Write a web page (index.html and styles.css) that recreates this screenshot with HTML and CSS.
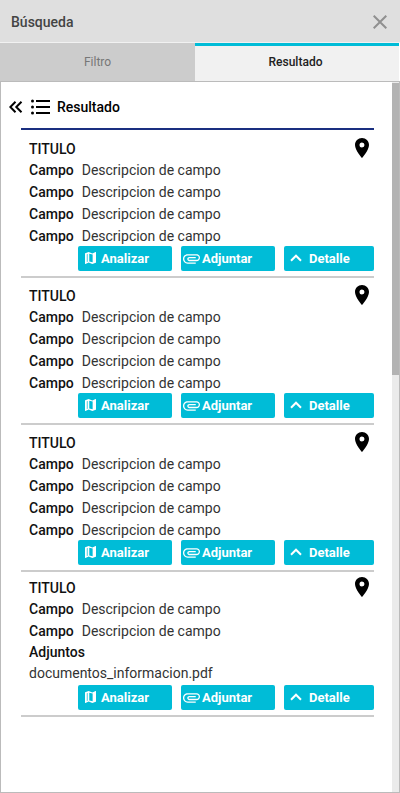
FILE: index.html
```
<!DOCTYPE html>
<html lang="es">
<head>
<meta charset="utf-8">
<meta name="viewport" content="width=device-width, initial-scale=1">
<title>Búsqueda</title>
<link rel="stylesheet" href="styles.css">
</head>
<body>
<svg class="sprite" aria-hidden="true">
  <symbol id="pin" viewBox="0 0 14 20"><path d="M7 0C3.1 0 0 3.1 0 7c0 5.200 7 13 7 13s7-7.800 7-13c0-3.900-3.100-7-7-7zm0 9.500a2.500 2.500 0 1 1 0-5 2.500 2.500 0 0 1 0 5z"/></symbol>
  <symbol id="map" viewBox="3 3 18 18" preserveAspectRatio="none"><path fill-rule="evenodd" d="M20.500 3l-.16.030L15 5.100 9 3 3.360 4.900c-.21.070-.36.250-.36.480V20.500c0 .28.220.5.500.5l.16-.030L9 18.900l6 2.100 5.640-1.900c.21-.070.36-.25.36-.48V3.500c0-.28-.22-.5-.5-.5zM10 5.470l5.500 1.400v11.660l-5.500-1.400V5.470zM6 6.460l1.200-.4v11.400l-1.200.4V6.460z"/></symbol>
  <symbol id="clip" viewBox="2 7 20 11"><path d="M2 12.500C2 9.460 4.460 7 7.500 7H18c2.210 0 4 1.790 4 4s-1.790 4-4 4H9.500C8.120 15 7 13.880 7 12.500S8.120 10 9.500 10H17v1.500H9.410c-1.100 0-1.100 2 0 2H18c1.380 0 2.500-1.120 2.500-2.500S19.380 8.500 18 8.500H7.500c-2.210 0-4 1.790-4 4s1.790 4 4 4H17V18H7.500C4.460 18 2 15.540 2 12.500z"/></symbol>
  <symbol id="up" viewBox="0 0 12 8"><path d="M1 6.700l5-5 5 5" fill="none" stroke="currentColor" stroke-width="2"/></symbol>
</svg>
<main class="panel">
  <header class="panel-header">
    <h1 class="panel-title">Búsqueda</h1>
    <button class="icon-button" type="button" aria-label="Cerrar">
      <svg class="close-icon" viewBox="0 0 14 14"><path d="M.7.7l12.600 12.600M13.300.7L.7 13.300" fill="none" stroke="currentColor" stroke-width="2"/></svg>
    </button>
  </header>
  <nav class="tabs" role="tablist">
    <button class="tab" type="button" role="tab" aria-selected="false">Filtro</button>
    <button class="tab tab-active" type="button" role="tab" aria-selected="true">Resultado</button>
  </nav>
  <div class="panel-body">
    <section class="content">
      <div class="results-heading">
        <button class="icon-button" type="button" aria-label="Volver">
          <svg class="back-icon" viewBox="0 0 14 12"><path d="M6.500.8L1.300 6l5.200 5.200M12.500.8L7.300 6l5.200 5.200" fill="none" stroke="currentColor" stroke-width="2"/></svg>
        </button>
        <svg class="list-icon" viewBox="0 0 19 16" aria-hidden="true"><path d="M5 1h14v2H5zM5 7h14v2H5zM5 13h14v2H5z"/><circle cx="1.500" cy="2" r="1.500"/><circle cx="1.500" cy="8" r="1.500"/><circle cx="1.500" cy="14" r="1.500"/></svg>
        <h2 class="results-title">Resultado</h2>
      </div>
      <div class="results">
        <article class="result">
          <div class="result-head"><h3 class="result-title">TITULO</h3><svg class="pin-icon" aria-hidden="true"><use href="#pin"/></svg></div>
          <dl class="fields">
            <div class="field"><dt>Campo</dt><dd>Descripcion de campo</dd></div>
            <div class="field"><dt>Campo</dt><dd>Descripcion de campo</dd></div>
            <div class="field"><dt>Campo</dt><dd>Descripcion de campo</dd></div>
            <div class="field"><dt>Campo</dt><dd>Descripcion de campo</dd></div>
          </dl>
          <div class="actions">
            <button class="action" type="button"><svg class="map-icon"><use href="#map"/></svg>Analizar</button>
            <button class="action action-attach" type="button"><svg class="clip-icon"><use href="#clip"/></svg>Adjuntar</button>
            <button class="action action-detail" type="button"><svg class="up-icon"><use href="#up"/></svg>Detalle</button>
          </div>
        </article>
        <article class="result">
          <div class="result-head"><h3 class="result-title">TITULO</h3><svg class="pin-icon" aria-hidden="true"><use href="#pin"/></svg></div>
          <dl class="fields">
            <div class="field"><dt>Campo</dt><dd>Descripcion de campo</dd></div>
            <div class="field"><dt>Campo</dt><dd>Descripcion de campo</dd></div>
            <div class="field"><dt>Campo</dt><dd>Descripcion de campo</dd></div>
            <div class="field"><dt>Campo</dt><dd>Descripcion de campo</dd></div>
          </dl>
          <div class="actions">
            <button class="action" type="button"><svg class="map-icon"><use href="#map"/></svg>Analizar</button>
            <button class="action action-attach" type="button"><svg class="clip-icon"><use href="#clip"/></svg>Adjuntar</button>
            <button class="action action-detail" type="button"><svg class="up-icon"><use href="#up"/></svg>Detalle</button>
          </div>
        </article>
        <article class="result">
          <div class="result-head"><h3 class="result-title">TITULO</h3><svg class="pin-icon" aria-hidden="true"><use href="#pin"/></svg></div>
          <dl class="fields">
            <div class="field"><dt>Campo</dt><dd>Descripcion de campo</dd></div>
            <div class="field"><dt>Campo</dt><dd>Descripcion de campo</dd></div>
            <div class="field"><dt>Campo</dt><dd>Descripcion de campo</dd></div>
            <div class="field"><dt>Campo</dt><dd>Descripcion de campo</dd></div>
          </dl>
          <div class="actions">
            <button class="action" type="button"><svg class="map-icon"><use href="#map"/></svg>Analizar</button>
            <button class="action action-attach" type="button"><svg class="clip-icon"><use href="#clip"/></svg>Adjuntar</button>
            <button class="action action-detail" type="button"><svg class="up-icon"><use href="#up"/></svg>Detalle</button>
          </div>
        </article>
        <article class="result result-compact">
          <div class="result-head"><h3 class="result-title">TITULO</h3><svg class="pin-icon" aria-hidden="true"><use href="#pin"/></svg></div>
          <dl class="fields">
            <div class="field"><dt>Campo</dt><dd>Descripcion de campo</dd></div>
            <div class="field"><dt>Campo</dt><dd>Descripcion de campo</dd></div>
            <div class="attachments"><dt>Adjuntos</dt><dd>documentos_informacion.pdf</dd></div>
          </dl>
          <div class="actions">
            <button class="action" type="button"><svg class="map-icon"><use href="#map"/></svg>Analizar</button>
            <button class="action action-attach" type="button"><svg class="clip-icon"><use href="#clip"/></svg>Adjuntar</button>
            <button class="action action-detail" type="button"><svg class="up-icon"><use href="#up"/></svg>Detalle</button>
          </div>
        </article>
      </div>
    </section>
    <div class="scroll-track" aria-hidden="true"><div class="scroll-thumb"></div></div>
  </div>
</main>
</body>
</html>
```
FILE: styles.css
```
* { box-sizing: border-box; }

body {
  margin: 0;
  font-family: Roboto, "Liberation Sans", sans-serif;
  font-size: 14px;
  color: #333;
  background: #fff;
}

h1, h2, h3, dl, dd { margin: 0; }

button {
  font-family: inherit;
  border: 0;
  cursor: pointer;
}

svg { flex: none; fill: currentColor; }

.sprite { display: none; }

.panel {
  display: flex;
  flex-direction: column;
  min-height: 100vh;
}

.panel-header {
  display: flex;
  align-items: center;
  justify-content: space-between;
  height: 43px;
  padding: 2px 13px 0 11px;
  background: #dfdfdf;
  border-bottom: 1px solid #f1f1f1;
}

.panel-title {
  font-size: 14px;
  font-weight: 500;
  line-height: 20px;
  color: #444;
}

.icon-button {
  display: flex;
  padding: 0;
  background: none;
  color: inherit;
}

.close-icon {
  width: 14px;
  height: 14px;
  color: #909090;
}

.tabs {
  display: grid;
  grid-template-columns: 195fr 204fr;
  height: 38px;
  padding-right: 1px;
}

.tab {
  padding: 0;
  font-size: 12px;
  font-weight: 400;
  color: #777;
  background: #ccc;
}

.tab-active {
  padding: 0 3px 3px 0;
  font-weight: 500;
  color: #212121;
  background: #f1f1f1;
  border-top: 3px solid #00bcd7;
}

.panel-body {
  flex: 1;
  display: flex;
  border: 1px solid #bbb;
}

.content { flex: 1; }

.results-heading {
  display: flex;
  align-items: center;
  height: 46px;
  padding: 4px 8px 0;
  color: #000;
}

.back-icon { width: 14px; height: 12px; }

.list-icon {
  width: 19px;
  height: 16px;
  margin: 0 7px 0 8px;
}

.results-title {
  font-size: 14px;
  font-weight: 500;
}

.results {
  margin: 0 18px 0 20px;
  padding-top: 1px;
  border-top: 2px solid #1a2f80;
}

.result {
  padding: 7px 0 5px;
  border-bottom: 2px solid #ccc;
}

.result-compact { padding-top: 5px; }

.result-head {
  display: flex;
  justify-content: space-between;
  height: 21px;
  padding: 0 5px 0 8px;
}

.result-title, dt {
  font-size: 14px;
  font-weight: 500;
  color: #111;
}

.result-title { line-height: 22px; }

.pin-icon { width: 14px; height: 20px; color: #000; }

.fields { padding-left: 8px; }

.field {
  display: flex;
  gap: 8px;
  line-height: 22px;
}

.attachments {
  padding-bottom: 2px;
  line-height: 21px;
}

.actions {
  display: grid;
  grid-template-columns: 94fr 94fr 90fr;
  gap: 9px;
  margin: -1px 0 0 57px;
}

.action {
  display: flex;
  align-items: center;
  gap: 5px;
  height: 25px;
  padding: 0 7px;
  font-size: 13px;
  font-weight: 700;
  color: #fff;
  background: #00bcd7;
  border-radius: 2px;
}

.action-attach { gap: 2px; padding: 0 2px; }
.action-detail { gap: 7px; padding: 0 6px; }

.map-icon { width: 11px; height: 12px; margin-bottom: 2px; }
.clip-icon { width: 17px; height: 10px; }
.up-icon { width: 12px; height: 8px; margin-bottom: 2px; }

.scroll-track {
  width: 7px;
  padding-top: 1px;
  background: #ebebeb;
}

.scroll-thumb {
  height: 41.2%;
  background: #b3b3b3;
}
```
